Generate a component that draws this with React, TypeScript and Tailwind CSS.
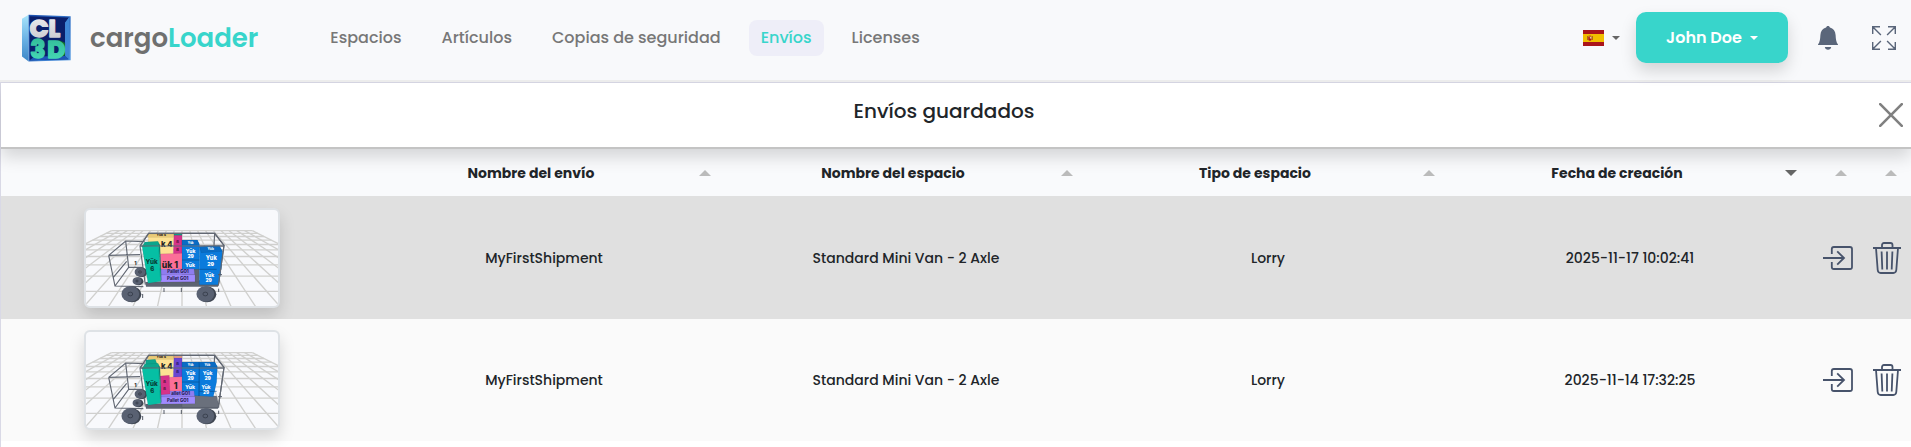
import React from "react";

type Box = {
  points: string;
  fill: string;
};

type Label = {
  x: number;
  y: number;
  size: number;
  text: string;
  fill: string;
};

type Shipment = {
  id: number;
  name: string;
  space: string;
  type: string;
  created: string;
  boxes: Box[];
  labels: Label[];
};

const navItems = ["Espacios", "Artículos", "Copias de seguridad", "Envíos", "Licenses"];

const columns = [
  { title: "Nombre del envío", sort: "none" },
  { title: "Nombre del espacio", sort: "none" },
  { title: "Tipo de espacio", sort: "none" },
  { title: "Fecha de creación", sort: "desc" },
];

const shipments: Shipment[] = [
  {
    id: 2,
    name: "MyFirstShipment",
    space: "Standard Mini Van - 2 Axle",
    type: "Lorry",
    created: "2025-11-17 10:02:41",
    boxes: [
      { points: "266,132 342,132 340,192 262,192", fill: "#fde293" },
      { points: "266,132 342,132 340,142 262,142", fill: "#eacb78" },
      { points: "342,132 366,132 366,192 340,192", fill: "#d6338a" },
      { points: "342,130 366,130 366,136 342,136", fill: "#0f9f86" },
      { points: "366,150 412,150 418,162 418,240 366,240", fill: "#0b7bdc" },
      { points: "366,150 412,150 418,164 366,164", fill: "#0a6cc4" },
      { points: "300,192 366,190 366,238 300,240", fill: "#fb6f98" },
      { points: "366,238 418,238 418,276 366,276", fill: "#5c6371" },
      { points: "418,170 478,167 487,184 484,236 476,284 418,284", fill: "#0b7bdc" },
      { points: "418,170 478,167 487,184 424,188", fill: "#0a6cc4" },
      { points: "303,238 402,236 404,254 303,255", fill: "#8f7df0" },
      { points: "303,255 405,254 405,275 303,276", fill: "#a08bff" },
      { points: "246,168 296,162 302,274 264,280", fill: "#06bfa4" },
      { points: "254,156 294,154 300,166 246,170", fill: "#0ba58c" },
      { points: "296,162 300,166 304,270 302,274", fill: "#078f7c" },
    ],
    labels: [
      { x: 304, y: 139, size: 10, text: "Yük 4", fill: "#222" },
      { x: 320, y: 172, size: 23, text: "k 4", fill: "#222" },
      { x: 353, y: 160, size: 12, text: "ß", fill: "#5b103c" },
      { x: 353, y: 184, size: 12, text: "ß", fill: "#5b103c" },
      { x: 330, y: 234, size: 26, text: "ük 1", fill: "#222" },
      { x: 392, y: 162, size: 9, text: "Yük", fill: "#fff" },
      { x: 392, y: 188, size: 15, text: "Yük", fill: "#fff" },
      { x: 392, y: 205, size: 15, text: "29", fill: "#fff" },
      { x: 390, y: 232, size: 15, text: "Yük", fill: "#fff" },
      { x: 452, y: 181, size: 10, text: "Yük", fill: "#fff" },
      { x: 454, y: 209, size: 17, text: "Yük", fill: "#fff" },
      { x: 452, y: 227, size: 16, text: "29", fill: "#fff" },
      { x: 448, y: 260, size: 15, text: "Yük", fill: "#fff" },
      { x: 446, y: 276, size: 15, text: "29", fill: "#fff" },
      { x: 354, y: 250, size: 13, text: "Pallet GO1", fill: "#2a2358" },
      { x: 353, y: 270, size: 13, text: "Pallet GO1", fill: "#2a2358" },
      { x: 275, y: 222, size: 19, text: "Yük", fill: "#063f38" },
      { x: 277, y: 243, size: 18, text: "6", fill: "#063f38" },
    ],
  },
  {
    id: 1,
    name: "MyFirstShipment",
    space: "Standard Mini Van - 2 Axle",
    type: "Lorry",
    created: "2025-11-14 17:32:25",
    boxes: [
      { points: "266,132 342,132 340,196 262,196", fill: "#fde293" },
      { points: "266,132 342,132 340,142 262,142", fill: "#eacb78" },
      { points: "342,132 366,132 366,196 340,196", fill: "#6a46d2" },
      { points: "342,130 366,130 366,138 342,138", fill: "#dd9a86" },
      { points: "366,246 470,252 478,286 366,286", fill: "#6a707c" },
      { points: "366,150 464,150 472,164 470,210 460,254 366,248", fill: "#0b7bdc" },
      { points: "366,150 464,150 472,164 366,164", fill: "#0a6cc4" },
      { points: "417,150 418,164 418,252 416,252", fill: "#064f93" },
      { points: "328,196 366,194 366,238 328,240", fill: "#fb6f98" },
      { points: "303,238 402,236 404,254 303,255", fill: "#8f7df0" },
      { points: "303,255 405,254 405,275 303,276", fill: "#a08bff" },
      { points: "300,192 328,190 330,246 303,248", fill: "#d6338a" },
      { points: "258,144 286,142 292,158 256,160", fill: "#0ba58c" },
      { points: "246,168 296,162 302,274 264,280", fill: "#06bfa4" },
      { points: "254,156 294,154 300,166 246,170", fill: "#0ba58c" },
      { points: "296,162 300,166 304,270 302,274", fill: "#078f7c" },
    ],
    labels: [
      { x: 304, y: 139, size: 10, text: "Yük 4", fill: "#222" },
      { x: 320, y: 172, size: 23, text: "k 4", fill: "#222" },
      { x: 353, y: 160, size: 12, text: "ß", fill: "#2b1763" },
      { x: 353, y: 184, size: 12, text: "ß", fill: "#2b1763" },
      { x: 314, y: 212, size: 12, text: "ß", fill: "#5b103c" },
      { x: 314, y: 234, size: 12, text: "ß", fill: "#5b103c" },
      { x: 347, y: 232, size: 26, text: "1", fill: "#222" },
      { x: 392, y: 161, size: 9, text: "Yük", fill: "#fff" },
      { x: 442, y: 161, size: 9, text: "Yük", fill: "#fff" },
      { x: 392, y: 188, size: 15, text: "Yük", fill: "#fff" },
      { x: 392, y: 205, size: 15, text: "29", fill: "#fff" },
      { x: 443, y: 188, size: 15, text: "Yük", fill: "#fff" },
      { x: 443, y: 205, size: 15, text: "29", fill: "#fff" },
      { x: 390, y: 232, size: 15, text: "Yük", fill: "#fff" },
      { x: 438, y: 231, size: 14, text: "Yük", fill: "#fff" },
      { x: 438, y: 246, size: 14, text: "29", fill: "#fff" },
      { x: 362, y: 250, size: 13, text: "allet GO1", fill: "#2a2358" },
      { x: 353, y: 270, size: 13, text: "Pallet GO1", fill: "#2a2358" },
      { x: 275, y: 222, size: 19, text: "Yük", fill: "#063f38" },
      { x: 277, y: 243, size: 18, text: "6", fill: "#063f38" },
    ],
  },
];

// floor grid in perspective, every line runs to the vanishing point (366, 15)
const floorColumns = Array.from({ length: 19 }, (_, i) => i - 9);
const floorRows = Array.from({ length: 10 }, (_, i) => 15 + 107 / (1 - i * 0.07));

const Logo = () => (
  <svg viewBox="66 44 148 144" className="h-12 w-[49px]" aria-hidden="true">
    <defs>
      <linearGradient id="logoSide" x1="0" y1="0" x2="0" y2="1">
        <stop offset="0" stopColor="#a9e6fb" />
        <stop offset="0.5" stopColor="#6db4e6" />
        <stop offset="1" stopColor="#3c86c6" />
      </linearGradient>
      <linearGradient id="logoFrame" x1="0" y1="0" x2="1" y2="1">
        <stop offset="0" stopColor="#1b4fae" />
        <stop offset="1" stopColor="#4f97e0" />
      </linearGradient>
      <linearGradient id="logoWhite" x1="0" y1="0" x2="0" y2="1">
        <stop offset="0" stopColor="#f2f2f4" />
        <stop offset="1" stopColor="#c4c4cc" />
      </linearGradient>
      <linearGradient id="logoGreen" x1="0" y1="0" x2="0" y2="1">
        <stop offset="0" stopColor="#2fb592" />
        <stop offset="1" stopColor="#4be0bd" />
      </linearGradient>
    </defs>
    <path d="M66 58 86 46 86 187 66 172Z" fill="url(#logoSide)" />
    <path d="M86 46 213 50 213 183 86 187Z" fill="url(#logoFrame)" />
    <path d="M89 50 208 54 196 70 196 170 206 180 89 183Z" fill="#0a1f6b" />
    <path d="M208 54 196 70 196 170 208 180Z" fill="#3f87d6" />
    <path d="M89 183 104 172 196 170 208 180Z" fill="#1d57b8" />
    <path d="M176 122 196 130 196 168 176 176Z" fill="#0b6b35" />
    <g fontFamily="Poppins, Inter, sans-serif" fontWeight="800" strokeWidth="4" strokeLinejoin="round">
      <text x="89" y="112" fontSize="76" fill="url(#logoWhite)" stroke="url(#logoWhite)">C</text>
      <text x="146" y="112" fontSize="72" fill="url(#logoWhite)" stroke="url(#logoWhite)">L</text>
      <text x="91" y="177" fontSize="76" fill="url(#logoGreen)" stroke="url(#logoGreen)">3</text>
      <text x="142" y="177" fontSize="74" fill="url(#logoGreen)" stroke="url(#logoGreen)">D</text>
    </g>
  </svg>
);

const SpainFlag = () => (
  <svg viewBox="0 0 21 16" className="h-4 w-[21px]" aria-hidden="true">
    <rect width="21" height="16" fill="#aa151b" />
    <rect y="4" width="21" height="8" fill="#f1bf00" />
    <rect x="4" y="6" width="1" height="4" fill="#ad6a1a" />
    <rect x="9" y="6" width="1" height="4" fill="#ad6a1a" />
    <path d="M5.3 6.6h3.2v2.6a1.6 1.6 0 0 1-3.2 0z" fill="#ad1519" />
    <rect x="6.8" y="7" width="1.6" height="1.6" fill="#d8c9b8" />
    <rect x="5.6" y="5.2" width="2.6" height="1.2" fill="#c8841c" />
  </svg>
);

const Caret = () => (
  <svg viewBox="0 0 8 4" className="h-1 w-2" fill="currentColor" aria-hidden="true">
    <path d="M0 0h8L4 4z" />
  </svg>
);

const BellIcon = () => (
  <svg viewBox="0 0 20 24" className="h-6 w-5" fill="currentColor" aria-hidden="true">
    <path d="M10 0c1 0 1.7.6 1.9 1.5 3.300.8 5.500 3.400 5.700 7.500.2 4.400.6 7.300 2.400 9.400V19H0v-.6C1.800 16.300 2.200 13.400 2.400 9 2.600 4.900 4.800 2.300 8.100 1.500 8.300.6 9 0 10 0z" />
    <path d="M6.800 21h6.400c-.3 1.700-1.500 2.800-3.200 2.800S7.100 22.700 6.800 21z" />
  </svg>
);

const ExpandIcon = () => (
  <svg viewBox="0 0 24 24" className="size-6" fill="none" stroke="currentColor" strokeWidth="1.4" aria-hidden="true">
    <path d="M.7 8V.7H8M.9.9l8 8M16 .7h7.300V8M23.100.9l-8 8M.7 16v7.300H8M.9 23.100l8-8M16 23.300h7.300V16M23.100 23.100l-8-8" />
  </svg>
);

const CloseIcon = () => (
  <svg viewBox="0 0 24 24" className="size-6" fill="none" stroke="currentColor" strokeWidth="2.6" strokeLinecap="round" aria-hidden="true">
    <path d="m1.200 1.200 21.600 21.600M22.800 1.200 1.200 22.800" />
  </svg>
);

const EnterIcon = () => (
  <svg viewBox="0 0 30 24" className="h-6 w-[30px]" fill="none" stroke="currentColor" strokeWidth="1.8" aria-hidden="true">
    <path d="M8.800 8V3.100c0-1.200.9-2.100 2.100-2.100h16c1.200 0 2.100.9 2.100 2.100v17.800c0 1.200-.9 2.100-2.100 2.100h-16c-1.200 0-2.100-.9-2.100-2.100V16" />
    <path d="M0 12h21M14.200 5.300 21 12l-6.800 6.700" />
  </svg>
);

const TrashIcon = () => (
  <svg viewBox="0 0 28 32" className="h-8 w-7" fill="none" stroke="currentColor" strokeWidth="1.8" aria-hidden="true">
    <path d="M0 6h28M9 6V3c0-1.200.8-2 2-2h6.500c1.200 0 2 .8 2 2v3" />
    <path d="m3 6 1.700 22c.2 1.900 1.200 3 3 3h12.600c1.800 0 2.800-1.100 3-3L25 6" />
    <path d="M14 9.500V27.500M8.600 9.500l.7 18M19.400 9.500l-.7 18" />
  </svg>
);

const SortArrow = ({ sort }: { sort: string }) => (
  <svg viewBox="0 0 12 6" className="h-1.5 w-3 shrink-0" aria-hidden="true">
    {sort == "desc" ? <path d="M0 0h12L6 6z" fill="#666" /> : <path d="M0 6h12L6 0z" fill="#bbb" />}
  </svg>
);

const Wheel = ({ x, y, r }: { x: number; y: number; r: number }) => (
  <g>
    <ellipse cx={x + 3} cy={y + 1} rx={r} ry={r * 0.85} fill="#3f4652" />
    <ellipse cx={x - 2} cy={y} rx={r * 0.95} ry={r * 0.82} fill="#596172" />
    <ellipse cx={x - 2} cy={y} rx={r * 0.26} ry={r * 0.2} fill="none" stroke="#2e3440" strokeWidth="2" />
  </g>
);

const Thumbnail = ({ boxes, labels }: { boxes: Box[]; labels: Label[] }) => (
  <svg viewBox="78 60 576 288" className="block h-24 w-full" role="img" aria-label="Vista previa">
    <g stroke="#d0d0ce" strokeWidth="4" fill="none">
      {floorColumns.map((k) => (
        <path key={k} d={`M${366 + k * 23.5} 122L${366 + k * 23.5 * 3.2} 357`} />
      ))}
      {floorRows.map((y) => (
        <path key={y} d={`M${366 - (y - 15) * 1.98} ${y}H${366 + (y - 15) * 1.98}`} />
      ))}
    </g>
    <g stroke="#626873" strokeWidth="3.500" fill="none">
      <path d="M146 196 197 153 254 155M146 196 165 288 250 290M197 153 206 232 165 288M146 196 240 194M160 262 200 214M206 232 248 232" />
      <path d="M266 130H464L492 166 475 286M464 130 458 240M240 168H492M240 168 266 130M240 168 256 284" />
    </g>
    <Wheel x={242} y={246} r={17} />
    <Wheel x={233} y={273} r={14} />
    <path d="M256 276 404 270 478 274 474 290 258 290Z" fill="#5c6371" />
    {boxes.map((box, i) => (
      <polygon key={i} points={box.points} fill={box.fill} stroke="#00000033" strokeWidth="1" />
    ))}
    <path d="M366 210H418M418 238H470" stroke="#064f93" strokeWidth="2" />
    <g fontFamily="Inter, sans-serif" fontWeight="800" textAnchor="middle">
      {labels.map((label, i) => (
        <text key={i} x={label.x} y={label.y} fontSize={label.size} fill={label.fill}>
          {label.text}
        </text>
      ))}
      <text x="226" y="224" fontSize="16" fill="#333">1</text>
    </g>
    <path d="M240 168H492M240 168 266 130H464L492 166 475 286" stroke="#626873" strokeWidth="3.500" fill="none" />
    <path d="M474 254h12M312 294v12M364 294v12M248 312v12M476 296v10" stroke="#555b66" strokeWidth="3" />
    <Wheel x={213} y={312} r={28} />
    <Wheel x={438} y={312} r={28} />
  </svg>
);

const App: React.FC = () => {
  return (
    <div className="font-[Poppins,Inter,sans-serif] text-[#212529]">
      <header className="relative z-20 flex h-[82px] items-center border-b-2 border-[#ececec] bg-[#f8f9fb] pr-[15px] pl-[22px] pb-[5px]">
        <a href="#" className="flex shrink-0 items-center gap-[19px]">
          <Logo />
          <span className="text-[26px] leading-9 font-semibold text-[#6f706f]">
            cargo<span className="text-[#38d5cb]">Loader</span>
          </span>
        </a>
        <nav className="ml-[60px] flex gap-4 text-base font-medium text-[#777]">
          {navItems.map((item) => (
            <a
              key={item}
              href="#"
              className={
                item == "Envíos"
                  ? "rounded-lg bg-[#eeeef8] px-3 py-1.5 whitespace-nowrap text-[#38d5cb]"
                  : "px-3 py-1.5 whitespace-nowrap"
              }
            >
              {item}
            </a>
          ))}
        </nav>
        <div className="ml-auto flex shrink-0 items-center">
          <button className="flex items-center gap-2 text-[#666]" aria-label="Idioma" aria-haspopup="menu">
            <SpainFlag />
            <Caret />
          </button>
          <button
            className="ml-4 flex h-[51px] w-[152px] items-center justify-center gap-2 rounded-[10px] bg-[#38d5cb] font-semibold whitespace-nowrap text-white shadow-[0_8px_16px_rgba(0,0,0,0.15)]"
            aria-haspopup="menu"
          >
            John Doe
            <Caret />
          </button>
          <button className="ml-[30px] text-[#5a667a]" aria-label="Notificaciones">
            <BellIcon />
          </button>
          <button className="ml-[34px] text-[#5a667a]" aria-label="Pantalla completa">
            <ExpandIcon />
          </button>
        </div>
      </header>

      <main className="border-t border-l border-[#d9d9e6] pb-1.5">
        <div className="relative z-10 flex h-[66px] items-center border-b-2 border-[#c4c4c4] bg-white pr-2 shadow-[0_8px_16px_rgba(0,0,0,0.15)]">
          <h1 className="ml-2 flex-1 pb-2 text-center text-xl font-medium">Envíos guardados</h1>
          <button className="text-[#808080]" aria-label="Cerrar">
            <CloseIcon />
          </button>
        </div>

        <table className="w-full table-fixed border-collapse text-center text-sm">
          <colgroup>
            <col />
            <col />
            <col />
            <col />
            <col />
            <col className="w-[50px]" />
            <col className="w-[50px]" />
          </colgroup>
          <thead>
            <tr className="h-[47px] bg-[#f9fafc]">
              <th aria-label="Imagen" />
              {columns.map((column) => (
                <th key={column.title} className="pr-3.5 font-bold">
                  <div className="flex items-center">
                    <span className="flex-1">{column.title}</span>
                    <SortArrow sort={column.sort} />
                  </div>
                </th>
              ))}
              <th className="pl-6" aria-label="Abrir">
                <SortArrow sort="none" />
              </th>
              <th className="pl-6" aria-label="Eliminar">
                <SortArrow sort="none" />
              </th>
            </tr>
          </thead>
          <tbody>
            {shipments.map((shipment) => (
              <tr key={shipment.id} className="h-[122px] bg-[#fafafa] font-medium first:h-[123px] first:bg-[#e0e0e0]">
                <td>
                  <div className="mx-auto w-[196px] overflow-hidden rounded-md border-2 border-[#dee2e6] bg-[#f8f9fc] shadow-[0_8px_16px_rgba(0,0,0,0.15)]">
                    <Thumbnail boxes={shipment.boxes} labels={shipment.labels} />
                  </div>
                </td>
                <td>{shipment.name}</td>
                <td>{shipment.space}</td>
                <td>{shipment.type}</td>
                <td>{shipment.created}</td>
                <td>
                  <button className="block pl-3 text-[#47536b]" aria-label="Abrir envío">
                    <EnterIcon />
                  </button>
                </td>
                <td>
                  <button className="block pl-3 text-[#47536b]" aria-label="Eliminar envío">
                    <TrashIcon />
                  </button>
                </td>
              </tr>
            ))}
          </tbody>
        </table>
      </main>
    </div>
  );
};

export default App;
